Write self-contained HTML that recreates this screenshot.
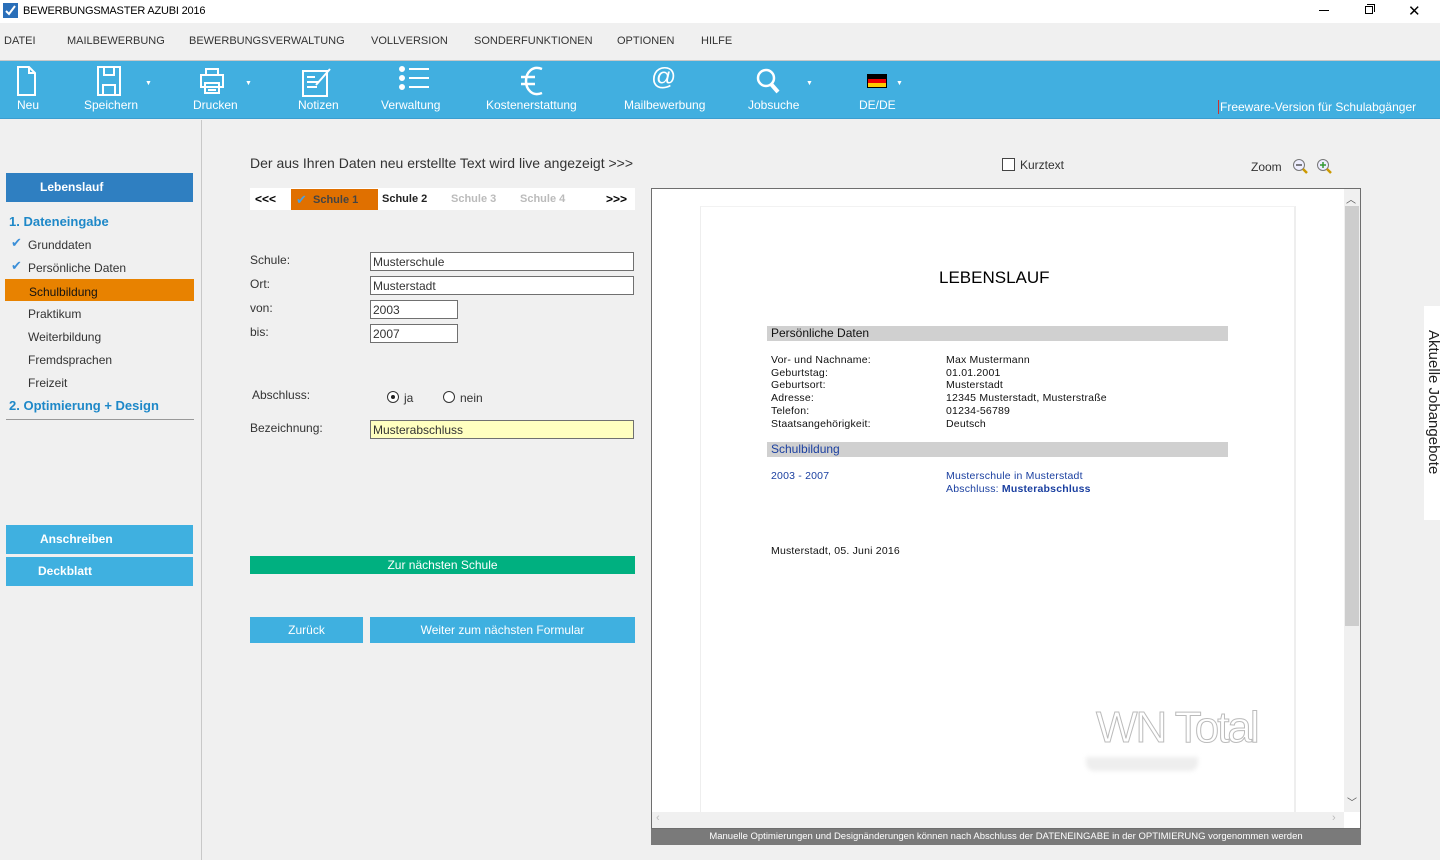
<!DOCTYPE html>
<html><head><meta charset="utf-8"><style>
*{margin:0;padding:0;box-sizing:border-box}
body{width:1440px;height:860px;background:#f0f0f0;font-family:"Liberation Sans",sans-serif;position:relative;overflow:hidden;color:#333}
.a{position:absolute;white-space:nowrap}
.tb{color:#fff;font-size:12px;text-align:center}
.m{position:absolute;top:35px;font-size:11px;color:#333}
.inp{position:absolute;background:#fff;border:1px solid #707070;height:19px;font-size:12px;padding:2px 2px;color:#333}
.lbl{position:absolute;font-size:12px;color:#333}
.nav{position:absolute;left:28px;font-size:12px;color:#333}
.doc{position:absolute;font-size:10.5px;color:#111;letter-spacing:.2px}
</style></head><body>
<div class="a" style="left:0;top:0;width:1440px;height:23px;background:#fff"></div>
<div class="a" style="left:3px;top:3px;width:15px;height:15px;background:#2a6fb9"></div>
<svg class="a" style="left:3px;top:3px" width="15" height="15"><path d="M3 8l3 3 6-8" stroke="#fff" stroke-width="2" fill="none"/></svg>
<div class="a" style="left:23px;top:5px;font-size:11px;color:#000;letter-spacing:-.2px">BEWERBUNGSMASTER AZUBI 2016</div>
<div class="a" style="left:1319px;top:10px;width:10px;height:1px;background:#000"></div>
<div class="a" style="left:1365px;top:6px;width:8px;height:8px;border:1px solid #000"></div>
<div class="a" style="left:1367px;top:4px;width:8px;height:8px;border-top:1px solid #000;border-right:1px solid #000"></div>
<div class="a" style="left:1408px;top:2px;font-size:15px;color:#000">✕</div>
<div class="a" style="left:0;top:23px;width:1440px;height:38px;background:#f0f0f0;border-bottom:1px solid #c8c8c8"></div>
<div class="m" style="left:4px">DATEI</div>
<div class="m" style="left:67px">MAILBEWERBUNG</div>
<div class="m" style="left:189px">BEWERBUNGSVERWALTUNG</div>
<div class="m" style="left:371px">VOLLVERSION</div>
<div class="m" style="left:474px">SONDERFUNKTIONEN</div>
<div class="m" style="left:617px">OPTIONEN</div>
<div class="m" style="left:701px">HILFE</div>
<div class="a" style="left:0;top:61px;width:1440px;height:58px;background:#41afe0;border-bottom:1px solid #3a9dd0"></div>
<svg class="a" style="left:0;top:61px" width="1000" height="40" fill="none" stroke="#fff" stroke-width="2">
<path d="M18 6h11l6 6v22H18z M29 6v6h6"/>
<path d="M98 6h22v28H98z M104 6v8h10V6 M103 34v-10h12v10"/>
<path d="M206 8h12v6h-12z M201 14h22v12h-22z M205 22h14v10h-14z M208 26h8 M208 29h8"/>
<path d="M303 10h24v25h-24z M307 16h8 M307 21h12 M307 26h10 M316 24l14-16"/>
<circle cx="402" cy="8" r="2" fill="#fff"/><circle cx="402" cy="17" r="2" fill="#fff"/><circle cx="402" cy="26" r="2" fill="#fff"/>
<path d="M409 8h20 M409 17h20 M409 26h20"/>
<path d="M542 8c-10-4-16 4-16 12s6 16 16 12 M521 16h14 M521 23h14" stroke-width="2.5"/>
<circle cx="766" cy="17" r="8" stroke-width="2.5"/><path d="M771 23l7 8" stroke-width="4"/>
</svg>
<div class="a" style="left:651px;top:63px;font-size:25px;color:#fff">@</div>
<div class="a" style="left:867px;top:74px;width:20px;height:14px;border:1px solid #000;background:linear-gradient(#000 33%,#e00 33% 66%,#fc0 66%)"></div>
<div class="a" style="left:145px;top:80px;color:#fff;font-size:7px">▼</div>
<div class="a" style="left:245px;top:80px;color:#fff;font-size:7px">▼</div>
<div class="a" style="left:806px;top:80px;color:#fff;font-size:7px">▼</div>
<div class="a" style="left:896px;top:80px;color:#fff;font-size:7px">▼</div>
<div class="a tb" style="left:17px;top:98px">Neu</div>
<div class="a tb" style="left:84px;top:98px">Speichern</div>
<div class="a tb" style="left:193px;top:98px">Drucken</div>
<div class="a tb" style="left:298px;top:98px">Notizen</div>
<div class="a tb" style="left:381px;top:98px">Verwaltung</div>
<div class="a tb" style="left:486px;top:98px">Kostenerstattung</div>
<div class="a tb" style="left:624px;top:98px">Mailbewerbung</div>
<div class="a tb" style="left:748px;top:98px">Jobsuche</div>
<div class="a tb" style="left:859px;top:98px">DE/DE</div>
<div class="a tb" style="left:1218px;top:100px;border-left:1px solid #c33;padding-left:1px">Freeware-Version für Schulabgänger</div>
<div class="a" style="left:201px;top:120px;width:1px;height:740px;background:#c8c8c8"></div>
<div class="a" style="left:6px;top:173px;width:187px;height:29px;background:#2f7fc1;color:#fff;font-weight:bold;font-size:12px;line-height:29px;padding-left:34px">Lebenslauf</div>
<div class="a" style="left:9px;top:214px;font-size:13px;font-weight:bold;color:#1e88c8">1. Dateneingabe</div>
<div class="a" style="left:11px;top:235px;color:#3b8fd8;font-size:13px">✔</div>
<div class="nav" style="top:238px">Grunddaten</div>
<div class="a" style="left:11px;top:258px;color:#3b8fd8;font-size:13px">✔</div>
<div class="nav" style="top:261px">Persönliche Daten</div>
<div class="a" style="left:5px;top:279px;width:189px;height:22px;background:#e88200"></div>
<div class="nav" style="top:285px;left:29px;color:#111">Schulbildung</div>
<div class="nav" style="top:307px">Praktikum</div>
<div class="nav" style="top:330px">Weiterbildung</div>
<div class="nav" style="top:353px">Fremdsprachen</div>
<div class="nav" style="top:376px">Freizeit</div>
<div class="a" style="left:9px;top:398px;font-size:13px;font-weight:bold;color:#1e88c8">2. Optimierung + Design</div>
<div class="a" style="left:6px;top:419px;width:188px;height:1px;background:#999"></div>
<div class="a" style="left:6px;top:525px;width:187px;height:29px;background:#3fb0e0;color:#fff;font-weight:bold;font-size:12px;line-height:29px;padding-left:34px">Anschreiben</div>
<div class="a" style="left:6px;top:557px;width:187px;height:29px;background:#3fb0e0;color:#fff;font-weight:bold;font-size:12px;line-height:29px;padding-left:32px">Deckblatt</div>
<div class="a" style="left:250px;top:155px;font-size:14px;color:#333">Der aus Ihren Daten neu erstellte Text wird live angezeigt &gt;&gt;&gt;</div>
<div class="a" style="left:250px;top:188px;width:385px;height:22px;background:#fff"></div>
<div class="a" style="left:291px;top:189px;width:87px;height:21px;background:#e07000"></div>
<div class="a" style="left:255px;top:192px;font-size:12px;font-weight:bold;color:#000">&lt;&lt;&lt;</div>
<div class="a" style="left:296px;top:192px;font-size:13px;color:#4aa0e0">✔</div>
<div class="a" style="left:313px;top:194px;font-size:11px;font-weight:bold;color:#444">Schule 1</div>
<div class="a" style="left:382px;top:193px;font-size:11px;font-weight:bold;color:#222">Schule 2</div>
<div class="a" style="left:451px;top:193px;font-size:11px;font-weight:bold;color:#bbb">Schule 3</div>
<div class="a" style="left:520px;top:193px;font-size:11px;font-weight:bold;color:#bbb">Schule 4</div>
<div class="a" style="left:606px;top:192px;font-size:12px;font-weight:bold;color:#000">&gt;&gt;&gt;</div>
<div class="lbl" style="left:250px;top:253px">Schule:</div>
<div class="lbl" style="left:250px;top:277px">Ort:</div>
<div class="lbl" style="left:250px;top:301px">von:</div>
<div class="lbl" style="left:250px;top:325px">bis:</div>
<div class="inp" style="left:370px;top:252px;width:264px">Musterschule</div>
<div class="inp" style="left:370px;top:276px;width:264px">Musterstadt</div>
<div class="inp" style="left:370px;top:300px;width:88px">2003</div>
<div class="inp" style="left:370px;top:324px;width:88px">2007</div>
<div class="lbl" style="left:252px;top:388px">Abschluss:</div>
<div class="a" style="left:387px;top:391px;width:12px;height:12px;border:1.5px solid #333;border-radius:50%;background:#fff"></div>
<div class="a" style="left:391px;top:395px;width:4px;height:4px;border-radius:50%;background:#222"></div>
<div class="lbl" style="left:404px;top:391px">ja</div>
<div class="a" style="left:443px;top:391px;width:12px;height:12px;border:1.5px solid #333;border-radius:50%;background:#fff"></div>
<div class="lbl" style="left:460px;top:391px">nein</div>
<div class="lbl" style="left:250px;top:421px">Bezeichnung:</div>
<div class="inp" style="left:370px;top:420px;width:264px;background:#ffffc0">Musterabschluss</div>
<div class="a" style="left:250px;top:556px;width:385px;height:18px;background:#00b080;color:#fff;font-size:12px;text-align:center;line-height:18px">Zur nächsten Schule</div>
<div class="a" style="left:250px;top:617px;width:113px;height:26px;background:#3fb0e0;color:#fff;font-size:12px;text-align:center;line-height:26px">Zurück</div>
<div class="a" style="left:370px;top:617px;width:265px;height:26px;background:#3fb0e0;color:#fff;font-size:12px;text-align:center;line-height:26px">Weiter zum nächsten Formular</div>
<div class="a" style="left:1002px;top:158px;width:13px;height:13px;border:1.5px solid #444;background:#fff"></div>
<div class="lbl" style="left:1020px;top:158px">Kurztext</div>
<div class="lbl" style="left:1251px;top:160px">Zoom</div>
<svg class="a" style="left:1292px;top:158px" width="44" height="18"><circle cx="7" cy="7" r="5.5" fill="#eef" stroke="#777"/><path d="M4 7h6" stroke="#555" stroke-width="1.5"/><path d="M11 11l4 4" stroke="#c90" stroke-width="2.5"/><circle cx="31" cy="7" r="5.5" fill="#eef" stroke="#777"/><path d="M28 7h6M31 4v6" stroke="#393" stroke-width="1.5"/><path d="M35 11l4 4" stroke="#c90" stroke-width="2.5"/></svg>
<div class="a" style="left:651px;top:188px;width:710px;height:641px;background:#fff;border:1px solid #6e6e6e"></div>
<div class="a" style="left:700px;top:206px;width:596px;height:606px;background:#fff;border-left:1px solid #eee;border-right:2px solid #eee;border-top:1px solid #f2f2f2;overflow:hidden">
<div class="a" style="left:385px;top:550px;width:112px;height:14px;background:#eee;border-radius:0 0 8px 8px;filter:blur(2px)"></div>
<div class="a" style="left:395px;top:496px;font-size:44px;color:#fff;-webkit-text-stroke:1px #bbb;letter-spacing:-2px">WN Total</div>
</div>
<div class="a" style="left:1344px;top:189px;width:16px;height:623px;background:#f0f0f0"></div>
<div class="a" style="left:1345px;top:206px;width:14px;height:420px;background:#cdcdcd"></div>
<div class="a" style="left:1346px;top:191px;font-size:10px;color:#555">︿</div>
<div class="a" style="left:1347px;top:794px;font-size:10px;color:#555">﹀</div>
<div class="a" style="left:652px;top:812px;width:692px;height:16px;background:#f0f0f0"></div>
<div class="a" style="left:656px;top:812px;font-size:11px;color:#bbb">‹</div>
<div class="a" style="left:1332px;top:812px;font-size:11px;color:#bbb">›</div>
<div class="a" style="left:939px;top:268px;font-size:17px;color:#000">LEBENSLAUF</div>
<div class="a" style="left:767px;top:326px;width:461px;height:15px;background:#d0d0d0"></div>
<div class="a" style="left:771px;top:326px;font-size:12px;color:#111">Persönliche Daten</div>
<div class="doc" style="left:771px;top:354px;line-height:12.7px">Vor- und Nachname:<br>Geburtstag:<br>Geburtsort:<br>Adresse:<br>Telefon:<br>Staatsangehörigkeit:</div>
<div class="doc" style="left:946px;top:354px;line-height:12.7px">Max Mustermann<br>01.01.2001<br>Musterstadt<br>12345 Musterstadt, Musterstraße<br>01234-56789<br>Deutsch</div>
<div class="a" style="left:767px;top:442px;width:461px;height:15px;background:#d0d0d0"></div>
<div class="a" style="left:771px;top:442px;font-size:12px;color:#1a3fa0">Schulbildung</div>
<div class="doc" style="left:771px;top:470px;color:#1a3fa0">2003 - 2007</div>
<div class="doc" style="left:946px;top:470px;color:#1a3fa0;line-height:12.5px">Musterschule in Musterstadt<br>Abschluss: <b>Musterabschluss</b></div>
<div class="doc" style="left:771px;top:545px">Musterstadt, 05. Juni 2016</div>
<div class="a" style="left:651px;top:829px;width:710px;height:16px;background:#7a7a7a;color:#fff;font-size:9.5px;text-align:center;line-height:16px">Manuelle Optimierungen und Designänderungen können nach Abschluss der DATENEINGABE in der OPTIMIERUNG vorgenommen werden</div>
<div class="a" style="left:1424px;top:306px;width:16px;height:214px;background:#fff"></div>
<div class="a" style="left:1425px;top:330px;font-size:15px;color:#222;writing-mode:vertical-rl">Aktuelle Jobangebote</div>
</body></html>
